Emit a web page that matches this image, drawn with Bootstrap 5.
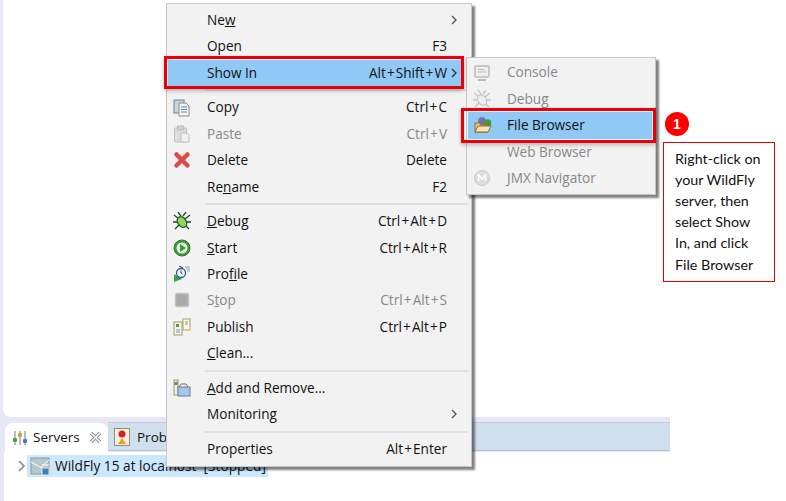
<!DOCTYPE html>
<html lang="en">
<head>
    <meta charset="UTF-8">
    <meta name="viewport" content="width=device-width, initial-scale=1.0">
    <title>Show In File Browser</title>
    <link rel="stylesheet" href="https://cdn.jsdelivr.net/npm/bootstrap@5.3.0/dist/css/bootstrap.min.css">
    <style>
        html, body { height: 501px; overflow: hidden; }
        body { background: #fff; font-family: "Open Sans", "Noto Sans", sans-serif; color: #111; position: relative; }

        .workspace { height: 501px; }
        .editor-back { height: 417px; width: 12px; background: #e7e8f7; }
        .editor-pane { height: 100%; margin-left: 3px; background: #fff; border-bottom-left-radius: 8px; }
        .servers-view { height: 84px; background: #fff; border-left: 4px solid #e7e8f7; }
        .view-top { width: 666px; height: 35px; padding: 6px 0 0 1px; background: #e7e8f7; }

        .tab-on { width: 103px; height: 29px; background: #fff; border-radius: 8px 8px 0 0; font-size: 13.5px; padding-left: 7px; gap: 5px; }
        .tab-rest { height: 29px; margin-top: -1px; padding-top: 1px; background: #d0dfee; border-top: 1px solid #c9c9d6; border-bottom: 1px solid #b9c0d4; padding-left: 6px; gap: 7px; font-size: 13.5px; }
        .server-row { margin: 3px 0 0 23px; width: 241px; height: 22px; background: #cce8ff; font-size: 13.7px; padding-left: 3px; gap: 5px; white-space: pre; position: relative; }
        .twisty { position: absolute; left: -10px; top: 5px; }

        .ctx-menu { position: absolute; background: #f2f2f2; border: 1px solid #c6c6c6; box-shadow: 3px 3px 2px rgba(0,0,0,.5); border-radius: 0; font-size: 13.6px; }
        .ctx-main { left: 166px; top: 3px; width: 306px; height: 464px; padding-top: 3px; }
        .ctx-sub { left: 466px; top: 57px; width: 190px; height: 138px; padding-top: 1.4px; z-index: 2; }
        .ctx-row { height: 26.4px; display: flex; align-items: center; padding: 0 0 0 40px; color: #111; white-space: nowrap; position: relative; }
        .ctx-row.dim { color: #85888c; }
        .ctx-row.hot { background: #90c8f6; margin: 0 9px 0 1px; padding-left: 39px; }
        .ctx-sub .ctx-row.hot { margin: 0 3px 0 1px; }
        .ctx-key { margin-left: auto; padding-right: 24px; }
        .ctx-row.hot .ctx-key { padding-right: 15px; }
        .plus-sign { margin: 0 1.1px; }
        .ctx-arrow { position: absolute; right: 13px; top: 50%; margin-top: -5px; }
        .ctx-row.hot .ctx-arrow { right: 4px; }
        .ctx-icon { position: absolute; left: 6px; top: 50%; margin-top: -9px; width: 18px; height: 18px; }
        .ctx-line { height: 2px; background: #e0e0e0; margin: 3.1px 3px 3.1px 38px; }

        .red-box { position: absolute; border: 3px solid #ea0008; box-shadow: 0 2px 4px rgba(0,0,0,.25); z-index: 3; }
        .red-show { left: 164px; top: 56px; width: 300px; height: 33px; }
        .red-file { left: 461px; top: 108px; width: 195px; height: 35px; }
        .step-dot { position: absolute; left: 665px; top: 112px; width: 24px; height: 24px; border-radius: 50%; background: #f00; color: #fff; font: 700 14px/24px "Liberation Sans", sans-serif; text-align: center; }
        .step-note { position: absolute; left: 663px; top: 142px; width: 112px; height: 140px; border: 1px solid #e60000; background: #fff; padding: 4.5px 10px 0 11px; font: 14.3px/21.2px "Lato", "Noto Sans", sans-serif; color: #111; }
    </style>
</head>
<body>
    <div class="workspace">
        <div class="editor-back"><div class="editor-pane"></div></div>
        <div class="servers-view">
            <div class="view-top d-flex">
                <div class="tab-on d-flex align-items-center">
                    <svg width="16" height="16" viewBox="0 0 16 16"><path d="M3 1v14M8 1v14M13 1v14" stroke="#7a7a7a" fill="none"/><rect x="1" y="8" width="4" height="4" rx="1" fill="#5a9a3a"/><rect x="6" y="3" width="4" height="4" rx="1" fill="#d8a030"/><rect x="11" y="9" width="4" height="4" rx="1" fill="#4a7ab8"/></svg>
                    <span>Servers</span>
                    <svg class="ms-1" width="13" height="13" viewBox="0 0 13 13"><path d="M2 2l9 9M11 2l-9 9" stroke="#8a8a8a" stroke-width="3.500"/><path d="M2 2l9 9M11 2l-9 9" stroke="#fff" stroke-width="1.500"/></svg>
                </div>
                <div class="tab-rest flex-grow-1 d-flex align-items-center">
                    <svg width="16" height="18" viewBox="0 0 16 18"><rect x=".5" y=".5" width="15" height="17" fill="#f4efe0" stroke="#9a8a70"/><circle cx="8" cy="6" r="3.5" fill="#d92020"/><path d="M8 10l4 6H4z" fill="#e8a020"/></svg>
                    <span>Problems</span>
                </div>
            </div>
            <div class="server-row d-flex align-items-center">
                <svg class="twisty" width="9" height="12" viewBox="0 0 9 12"><path d="M2 1l5 5-5 5" fill="none" stroke="#888" stroke-width="1.6"/></svg>
                <svg width="20" height="20" viewBox="0 0 20 20"><rect x="1" y="2" width="18" height="16" fill="#b9c6cc" stroke="#8a9aa2"/><path d="M1 6l11 6M19 4l-9 8M12 9h7" stroke="#fff" fill="none"/><rect x="12" y="12" width="7" height="7" fill="#3f7fb5" stroke="#dfe9f0"/></svg>
                <span>WildFly 15 at localhost  [Stopped]</span>
            </div>
        </div>
    </div>

    <div class="ctx-menu ctx-main">
        <div class="ctx-row">Ne<u>w</u><svg class="ctx-arrow" width="7" height="10" viewBox="0 0 7 10"><path d="M1 1l4 4-4 4" fill="none" stroke="#555" stroke-width="1.4"/></svg></div>
        <div class="ctx-row">Open<span class="ctx-key">F3</span></div>
        <div class="ctx-row hot">Show In<span class="ctx-key">Alt<span class="plus-sign">+</span>Shift<span class="plus-sign">+</span>W</span><svg class="ctx-arrow" width="7" height="10" viewBox="0 0 7 10"><path d="M1 1l4 4-4 4" fill="none" stroke="#333" stroke-width="1.4"/></svg></div>
        <div class="ctx-line"></div>
        <div class="ctx-row">
            <svg class="ctx-icon" viewBox="0 0 18 18"><rect x="1" y="1" width="10" height="13" fill="#c8d4e2" stroke="#6f8296"/><path d="M6 4h7l3 3v10H6z" fill="#f4f6fa" stroke="#8a8f70"/><path d="M8 8h6M8 10.500h6M8 13h6" stroke="#5a86b8"/></svg>
            Copy<span class="ctx-key">Ctrl<span class="plus-sign">+</span>C</span></div>
        <div class="ctx-row dim">
            <svg class="ctx-icon" viewBox="0 0 18 18"><rect x="1.500" y="3" width="12" height="14" rx="1" fill="#dcdcdc" stroke="#c0c0c0"/><rect x="4.500" y="1" width="6" height="4" fill="#d0d0d0" stroke="#bdbdbd"/><path d="M8 8h6l2 2v7H8z" fill="#f2f2f2" stroke="#bdbdbd"/></svg>
            Paste<span class="ctx-key">Ctrl<span class="plus-sign">+</span>V</span></div>
        <div class="ctx-row">
            <svg class="ctx-icon" viewBox="0 0 18 18"><path d="M3.500 3.500l11 11M14.500 3.500l-11 11" stroke="#dc4a4a" stroke-width="4.500" stroke-linecap="round"/></svg>
            Delete<span class="ctx-key">Delete</span></div>
        <div class="ctx-row">Re<u>n</u>ame<span class="ctx-key">F2</span></div>
        <div class="ctx-line"></div>
        <div class="ctx-row">
            <svg class="ctx-icon" viewBox="0 0 18 18"><path d="M1 3l5 4M17 3l-5 4M0 10h5M18 10h-5M2 17l4-4M16 17l-4-4M5 0l3 4M13 0l-3 4" stroke="#1f4a28" stroke-width="1.300"/><ellipse cx="9" cy="10" rx="4.200" ry="5.800" transform="rotate(-35 9 10)" fill="#93d65e" stroke="#24602c" stroke-width="1.300"/></svg>
            <span><u>D</u>ebug</span><span class="ctx-key">Ctrl<span class="plus-sign">+</span>Alt<span class="plus-sign">+</span>D</span></div>
        <div class="ctx-row">
            <svg class="ctx-icon" viewBox="0 0 18 18"><circle cx="9" cy="9" r="8" fill="#3f9a3f" stroke="#2a7a2a"/><circle cx="9" cy="9" r="5.500" fill="#e6f2dc"/><path d="M7 5l6 4-6 4z" fill="#3f9a3f"/></svg>
            <span><u>S</u>tart</span><span class="ctx-key">Ctrl<span class="plus-sign">+</span>Alt<span class="plus-sign">+</span>R</span></div>
        <div class="ctx-row">
            <svg class="ctx-icon" viewBox="0 0 18 18"><path d="M1 9v8l8-3z" fill="#3fa04a"/><circle cx="8" cy="8" r="4.500" fill="#fff" stroke="#1f5f9f" stroke-width="1.300"/><path d="M8 5.500V8l1.500 1" stroke="#333" fill="none"/><path d="M12 2h5M13 4h4M14 6h3" stroke="#8aa"/><path d="M6 1l4 2" stroke="#333"/></svg>
            <span>Pro<u>f</u>ile</span></div>
        <div class="ctx-row dim">
            <svg class="ctx-icon" viewBox="0 0 18 18"><rect x="2.500" y="2.500" width="13" height="13" rx="1.500" fill="#aaa" stroke="#c4c4c4" stroke-width="1.500"/></svg>
            <span>S<u>t</u>op</span><span class="ctx-key">Ctrl<span class="plus-sign">+</span>Alt<span class="plus-sign">+</span>S</span></div>
        <div class="ctx-row">
            <svg class="ctx-icon" viewBox="0 0 18 18"><rect x="1" y="4" width="8" height="13" fill="#f6f4e6" stroke="#a09a70"/><rect x="10" y="1" width="7" height="11" fill="#fbf7e4" stroke="#b0a060"/><rect x="3" y="6" width="3" height="3" fill="#4a9a4a"/><path d="M3 12h4M3 14h4M12 4h3M12 6h3" stroke="#7a9ab8"/></svg>
            Publish<span class="ctx-key">Ctrl<span class="plus-sign">+</span>Alt<span class="plus-sign">+</span>P</span></div>
        <div class="ctx-row"><span><u>C</u>lean...</span></div>
        <div class="ctx-line"></div>
        <div class="ctx-row">
            <svg class="ctx-icon" viewBox="0 0 18 18"><rect x="1" y="1" width="4" height="15" fill="#f0f0e0" stroke="#8a9a7a"/><rect x="1.500" y="3" width="3" height="3" fill="#4a9a4a"/><path d="M6 8l2-3h5l2 3" fill="none" stroke="#8a6a4a"/><rect x="5" y="8" width="12" height="9" fill="#a8c8e8" stroke="#5f7f9f"/></svg>
            <span><u>A</u>dd and Remove...</span></div>
        <div class="ctx-row"><span>Monitorin<u>g</u></span><svg class="ctx-arrow" width="7" height="10" viewBox="0 0 7 10"><path d="M1 1l4 4-4 4" fill="none" stroke="#555" stroke-width="1.4"/></svg></div>
        <div class="ctx-line"></div>
        <div class="ctx-row">Properties<span class="ctx-key">Alt<span class="plus-sign">+</span>Enter</span></div>
    </div>
    <div class="red-box red-show"></div>

    <div class="ctx-menu ctx-sub">
        <div class="ctx-row dim">
            <svg class="ctx-icon" viewBox="0 0 18 18"><rect x="2" y="2" width="14" height="11" rx="1" fill="#eee" stroke="#bbb" stroke-width="1.500"/><path d="M5 5.500h6M5 8h8" stroke="#bbb"/><path d="M5 16h8" stroke="#bbb" stroke-width="2"/></svg>
            Console</div>
        <div class="ctx-row dim">
            <svg class="ctx-icon" viewBox="0 0 18 18"><path d="M1 3l5 4M17 3l-5 4M0 10h5M18 10h-5M2 17l4-4M16 17l-4-4M5 0l3 4M13 0l-3 4" stroke="#c4c4c4" stroke-width="1.300"/><ellipse cx="9" cy="10" rx="4.200" ry="5.800" transform="rotate(-35 9 10)" fill="#eee" stroke="#c0c0c0"/></svg>
            Debug</div>
        <div class="ctx-row hot">
            <svg class="ctx-icon" viewBox="0 0 18 18"><circle cx="8" cy="5" r="3.800" fill="#7a6ab0"/><circle cx="13.500" cy="7" r="3.800" fill="#3f9a3f"/><path d="M1 16V7h5l1 2h6v7z" fill="#f0c878" stroke="#8a6a2a"/><path d="M1 16l3-6h13l-3 6z" fill="#fbe6b0" stroke="#8a6a2a"/></svg>
            File Browser</div>
        <div class="ctx-row dim">Web Browser</div>
        <div class="ctx-row dim">
            <svg class="ctx-icon" viewBox="0 0 18 18"><circle cx="9" cy="9" r="7.500" fill="#ddd" stroke="#c8c8c8"/><path d="M5.500 12V6l3.500 4 3.500-4v6" fill="none" stroke="#fff" stroke-width="1.600"/></svg>
            JMX Navigator</div>
    </div>
    <div class="red-box red-file"></div>

    <div class="step-dot">1</div>
    <div class="step-note">Right-click on your WildFly server, then select Show In, and click File Browser</div>
</body>
</html>
